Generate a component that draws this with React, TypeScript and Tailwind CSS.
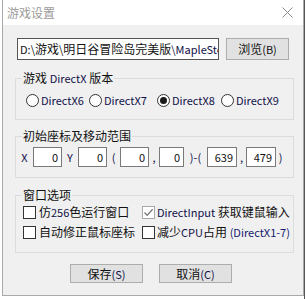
import React from "react";

const F = { fontFamily: '"Noto Sans CJK SC", "Noto Sans", sans-serif' };

function L({ children, c }: { children: React.ReactNode; c?: string }) {
  return <span className={`text-[11px] ${c ?? ""}`}>{children}</span>;
}

function Radio({ label, checked, w }: { label: string; checked?: boolean; w: string }) {
  return (
    <div className={`flex shrink-0 items-center ${w}`}>
      <div className="flex h-[13px] w-[13px] shrink-0 items-center justify-center rounded-full border border-[#333] bg-white">
        {checked && <div className="h-[7px] w-[7px] rounded-full bg-[#1a1a1a]" />}
      </div>
      <span className="ml-[2px] whitespace-nowrap text-[11px] leading-[16px] text-[#10104a]">{label}</span>
    </div>
  );
}

function Check({ checked, disabled }: { checked?: boolean; disabled?: boolean }) {
  return (
    <div
      className={`flex h-[13px] w-[13px] shrink-0 items-center justify-center border bg-white ${
        disabled ? "border-[#a8a8a8]" : "border-[#333]"
      }`}
    >
      {checked && (
        <svg width="11" height="11" viewBox="0 0 11 11">
          <path d="M1.5 5.5 L4.2 8.3 L9.6 2.2" fill="none" stroke="#7a7a7a" strokeWidth="1.3" />
        </svg>
      )}
    </div>
  );
}

function Num({ v, w }: { v: string; w: string }) {
  return (
    <div className={`flex h-[20px] ${w} shrink-0 items-center justify-end border border-[#7a7a7a] bg-white pr-[3px] text-[11px] leading-[16px] text-[#111]`}>
      {v}
    </div>
  );
}

function Sep({ t, w }: { t: string; w: string }) {
  return <span className={`${w} shrink-0 whitespace-nowrap text-center text-[11px] leading-[16px] text-[#10104a]`}>{t}</span>;
}

function Legend({ children }: { children: React.ReactNode }) {
  return (
    <div className="-mt-[9px] ml-[6px] w-fit whitespace-nowrap bg-[#f0f0f0] px-[1px] text-[12px] leading-[16px] text-[#111]">{children}</div>
  );
}

export default function App() {
  return (
    <div className="relative h-[299px] w-[306px] overflow-hidden bg-white" style={F}>
      <div className="absolute right-[1px] top-0 h-full w-[1px] bg-[#555]" />
      <div className="ml-[2px] flex h-[296px] w-[302px] flex-col border-x border-b border-[#a9a9a9] bg-[#f0f0f0]">
        <div className="flex h-[25px] shrink-0 items-center justify-between bg-white pl-[4px] pr-[10px]">
          <span className="text-[12px] leading-[16px] text-[#9a9a9a]">游戏设置</span>
          <svg width="11" height="11" viewBox="0 0 11 11">
            <path d="M0.5 0.5 L10.5 10.5 M10.5 0.5 L0.5 10.5" stroke="#8a8a8a" strokeWidth="1" />
          </svg>
        </div>

        <div className="ml-[14px] mt-[13px] flex shrink-0 items-center">
          <div className="flex h-[22px] w-[202px] items-center overflow-hidden whitespace-nowrap border border-[#555] bg-white pl-[2px] text-[12px] leading-[16px] text-[#111]">
            <L>D:\</L>游戏<L>\</L>明日谷冒险岛完美版<L c="text-[#10104a]">\MapleStory</L>
          </div>
          <button className="ml-[7px] flex h-[22px] w-[63px] items-center justify-center border border-[#adadad] bg-[#e1e1e1] text-[12px] leading-[16px] text-[#111]">
            浏览<L>(B)</L>
          </button>
        </div>

        <div className="ml-[12px] mt-[18px] h-[42px] w-[279px] shrink-0 border border-[#dcdcdc]">
          <Legend>
            游戏 <L c="text-[#10104a]">DirectX</L> 版本
          </Legend>
          <div className="ml-[10px] mt-[6px] flex items-center">
            <Radio label="DirectX6" w="w-[63px]" />
            <Radio label="DirectX7" w="w-[68px]" />
            <Radio label="DirectX8" checked w="w-[64px]" />
            <Radio label="DirectX9" w="w-[64px]" />
          </div>
        </div>

        <div className="ml-[12px] mt-[16px] h-[42px] w-[279px] shrink-0 border border-[#dcdcdc]">
          <Legend>初始座标及移动范围</Legend>
          <div className="mt-[3px] flex items-center">
            <Sep t="X" w="w-[17px]" />
            <Num v="0" w="w-[29px]" />
            <Sep t="Y" w="w-[16px]" />
            <Num v="0" w="w-[29px]" />
            <Sep t="(" w="w-[13px]" />
            <Num v="0" w="w-[29px]" />
            <Sep t="," w="w-[10px]" />
            <Num v="0" w="w-[25px]" />
            <Sep t=")-(" w="w-[23px]" />
            <Num v="639" w="w-[30px]" />
            <Sep t="," w="w-[9px]" />
            <Num v="479" w="w-[30px]" />
            <Sep t=")" w="w-[9px]" />
          </div>
        </div>

        <div className="ml-[12px] mt-[17px] h-[58px] w-[279px] shrink-0 border border-[#dcdcdc]">
          <Legend>窗口选项</Legend>
          <div className="mt-[1px] flex items-center pl-[7px]">
            <div className="flex w-[119px] shrink-0 items-center">
              <Check />
              <span className="ml-[3px] whitespace-nowrap text-[12px] leading-[16px] text-[#111]">
                仿<L c="text-[#10104a]">256</L>色运行窗口
              </span>
            </div>
            <div className="flex items-center">
              <Check checked disabled />
              <span className="ml-[2px] whitespace-nowrap text-[12px] leading-[16px] text-[#111]">
                <L c="text-[#10104a]">DirectInput</L> 获取键鼠输入
              </span>
            </div>
          </div>
          <div className="mt-[4px] flex items-center pl-[7px]">
            <div className="flex w-[119px] shrink-0 items-center">
              <Check />
              <span className="ml-[3px] whitespace-nowrap text-[12px] leading-[16px] text-[#111]">自动修正鼠标座标</span>
            </div>
            <div className="flex items-center">
              <Check />
              <span className="ml-[2px] whitespace-nowrap text-[12px] leading-[16px] text-[#111]">
                减少<L c="text-[#10104a]">CPU</L>占用 <L c="text-[#14206e]">(DirectX1-7)</L>
              </span>
            </div>
          </div>
        </div>

        <div className="ml-[67px] mt-[11px] flex shrink-0">
          <button className="flex h-[19px] w-[73px] items-center justify-center border border-[#adadad] bg-[#e1e1e1] text-[12px] leading-[16px] text-[#111]">
            保存<L c="text-[#10104a]">(S)</L>
          </button>
          <button className="ml-[16px] flex h-[19px] w-[73px] items-center justify-center border border-[#adadad] bg-[#e1e1e1] text-[12px] leading-[16px] text-[#111]">
            取消<L c="text-[#10104a]">(C)</L>
          </button>
        </div>
      </div>
    </div>
  );
}
